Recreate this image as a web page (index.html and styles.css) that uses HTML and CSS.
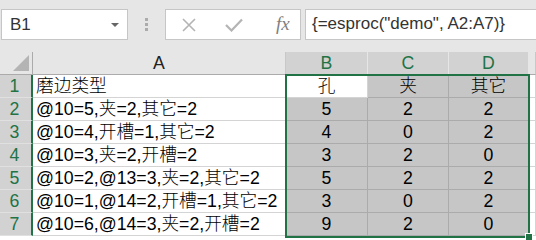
FILE: index.html
```html
<!DOCTYPE html>
<html lang="zh">
<head>
    <meta charset="UTF-8">
    <title>esproc</title>
    <link rel="stylesheet" href="styles.css">
</head>
<body>
    <div class="formula-bar">
        <div class="name-box">
            <span class="name">B1</span>
            <span class="drop"></span>
        </div>
        <div class="dots"><i></i><i></i><i></i></div>
        <div class="buttons">
            <svg class="btn-x" width="16" height="16" viewBox="0 0 16 16"><path d="M2 2 L14 14 M14 2 L2 14" stroke="#b4b4b4" stroke-width="1.6" fill="none"/></svg>
            <svg class="btn-ok" width="18" height="14" viewBox="0 0 18 14"><path d="M1 7 L6.5 12.5 L17 1.5" stroke="#b4b4b4" stroke-width="2.2" fill="none"/></svg>
            <span class="fx">fx</span>
        </div>
        <div class="formula">{=esproc("demo", A2:A7)}</div>
    </div>

    <div class="sheet">
        <div class="grid">
            <div class="corner"><span class="tri"></span></div>
            <div class="col-hdr">A</div>
            <div class="col-hdr sel">B</div>
            <div class="col-hdr sel">C</div>
            <div class="col-hdr sel">D</div>
            <div class="col-hdr"></div>

            <div class="row-hdr">1</div>
            <div class="cell">磨边类型</div>
            <div class="cell num active">孔</div>
            <div class="cell num shade">夹</div>
            <div class="cell num shade">其它</div>
            <div class="cell"></div>

            <div class="row-hdr">2</div>
            <div class="cell">@10=5,夹=2,其它=2</div>
            <div class="cell num shade">5</div>
            <div class="cell num shade">2</div>
            <div class="cell num shade">2</div>
            <div class="cell"></div>

            <div class="row-hdr">3</div>
            <div class="cell">@10=4,开槽=1,其它=2</div>
            <div class="cell num shade">4</div>
            <div class="cell num shade">0</div>
            <div class="cell num shade">2</div>
            <div class="cell"></div>

            <div class="row-hdr">4</div>
            <div class="cell">@10=3,夹=2,开槽=2</div>
            <div class="cell num shade">3</div>
            <div class="cell num shade">2</div>
            <div class="cell num shade">0</div>
            <div class="cell"></div>

            <div class="row-hdr">5</div>
            <div class="cell">@10=2,@13=3,夹=2,其它=2</div>
            <div class="cell num shade">5</div>
            <div class="cell num shade">2</div>
            <div class="cell num shade">2</div>
            <div class="cell"></div>

            <div class="row-hdr">6</div>
            <div class="cell">@10=1,@14=2,开槽=1,其它=2</div>
            <div class="cell num shade">3</div>
            <div class="cell num shade">0</div>
            <div class="cell num shade">2</div>
            <div class="cell"></div>

            <div class="row-hdr">7</div>
            <div class="cell">@10=6,@14=3,夹=2,开槽=2</div>
            <div class="cell num shade">9</div>
            <div class="cell num shade">2</div>
            <div class="cell num shade">0</div>
            <div class="cell"></div>
        </div>
        <div class="selection"><span class="handle"></span></div>
    </div>
</body>
</html>
```

FILE: styles.css
```css
body {
    margin: 0;
    background: #e6e6e6;
    font-family: "Liberation Sans", "Noto Sans CJK SC", sans-serif;
    color: #000;
    overflow: hidden;
    height: 240px;
}

/* formula bar */
.formula-bar {
    display: flex;
    align-items: center;
    height: 31px;
    padding: 9px 0 12px 1px;
}

.name-box {
    box-sizing: border-box;
    width: 127px;
    height: 31px;
    background: #fff;
    border: 1px solid #c6c6c6;
    display: flex;
    align-items: center;
    justify-content: space-between;
    padding: 0 8px 0 8px;
}

.name {
    font-size: 17px;
    color: #333;
}

.drop {
    width: 0;
    height: 0;
    border-left: 4px solid transparent;
    border-right: 4px solid transparent;
    border-top: 4px solid #666;
}

.dots {
    width: 37px;
    display: flex;
    flex-direction: column;
    align-items: center;
    gap: 2px;
}

.dots i {
    width: 3px;
    height: 3px;
    background: #ababab;
}

.buttons {
    box-sizing: border-box;
    width: 136px;
    height: 31px;
    background: #fff;
    border: 1px solid #c6c6c6;
    display: flex;
    align-items: center;
    padding-left: 15px;
}

.btn-x {
    margin-right: 28px;
}

.btn-ok {
    margin-right: 33px;
}

.fx {
    font-family: "Liberation Serif", serif;
    font-style: italic;
    font-size: 19px;
    color: #808080;
    margin-top: -2px;
}

.formula {
    box-sizing: border-box;
    flex: 1;
    height: 31px;
    margin-left: 4px;
    margin-right: -10px;
    background: #fff;
    border: 1px solid #c6c6c6;
    font-size: 17px;
    color: #333;
    padding-left: 6px;
    line-height: 28px;
}

/* sheet */
.sheet {
    position: relative;
    background: #fff;
    height: 188px;
}

.grid {
    display: grid;
    grid-template-columns: 33px 253px 82px 81px 80px 1fr;
    grid-auto-rows: 23px;
}

.grid > div {
    box-sizing: border-box;
    border-right: 1px solid #d4d4d4;
    border-bottom: 1px solid #d4d4d4;
    font-size: 17.7px;
    font-weight: 300;
    line-height: 22px;
    white-space: nowrap;
}

.grid > .corner {
    background: #e6e6e6;
    border-right: 1px solid #ababab;
    border-bottom: 1px solid #ababab;
    display: flex;
    align-items: flex-end;
    justify-content: flex-end;
    padding: 0 3px 3px 0;
}

.tri {
    width: 16px;
    height: 16px;
    background: #b4b4b4;
    clip-path: polygon(100% 0, 100% 100%, 0 100%);
}

.grid > .col-hdr {
    background: #e6e6e6;
    border-right: 1px solid #c8c8c8;
    border-bottom: 1px solid #ababab;
    text-align: center;
    color: #222;
}

.grid > .col-hdr.sel {
    background: #d2d2d2;
    color: #217346;
    border-right: 1px solid #e6e6e6;
}

.grid > .row-hdr {
    background: #d2d2d2;
    color: #217346;
    border-right: 2px solid #217346;
    border-bottom: 1px solid #e0e0e0;
    text-align: center;
    padding-right: 2px;
}

.grid > .cell {
    padding-left: 3px;
}

.grid > .num {
    text-align: center;
    padding-left: 0;
}

.grid > .shade {
    background: #c6c6c6;
    border-right: 1px solid #ababab;
    border-bottom: 1px solid #ababab;
}

.grid > .active {
    background: #fff;
}

/* selected range B1:D7 */
.selection {
    position: absolute;
    left: 285px;
    top: 22px;
    width: 245px;
    height: 164px;
    box-sizing: border-box;
    border: 2px solid #217346;
}

.handle {
    position: absolute;
    right: -5px;
    bottom: -5px;
    width: 6px;
    height: 6px;
    background: #217346;
    border: 1px solid #fff;
}
```
